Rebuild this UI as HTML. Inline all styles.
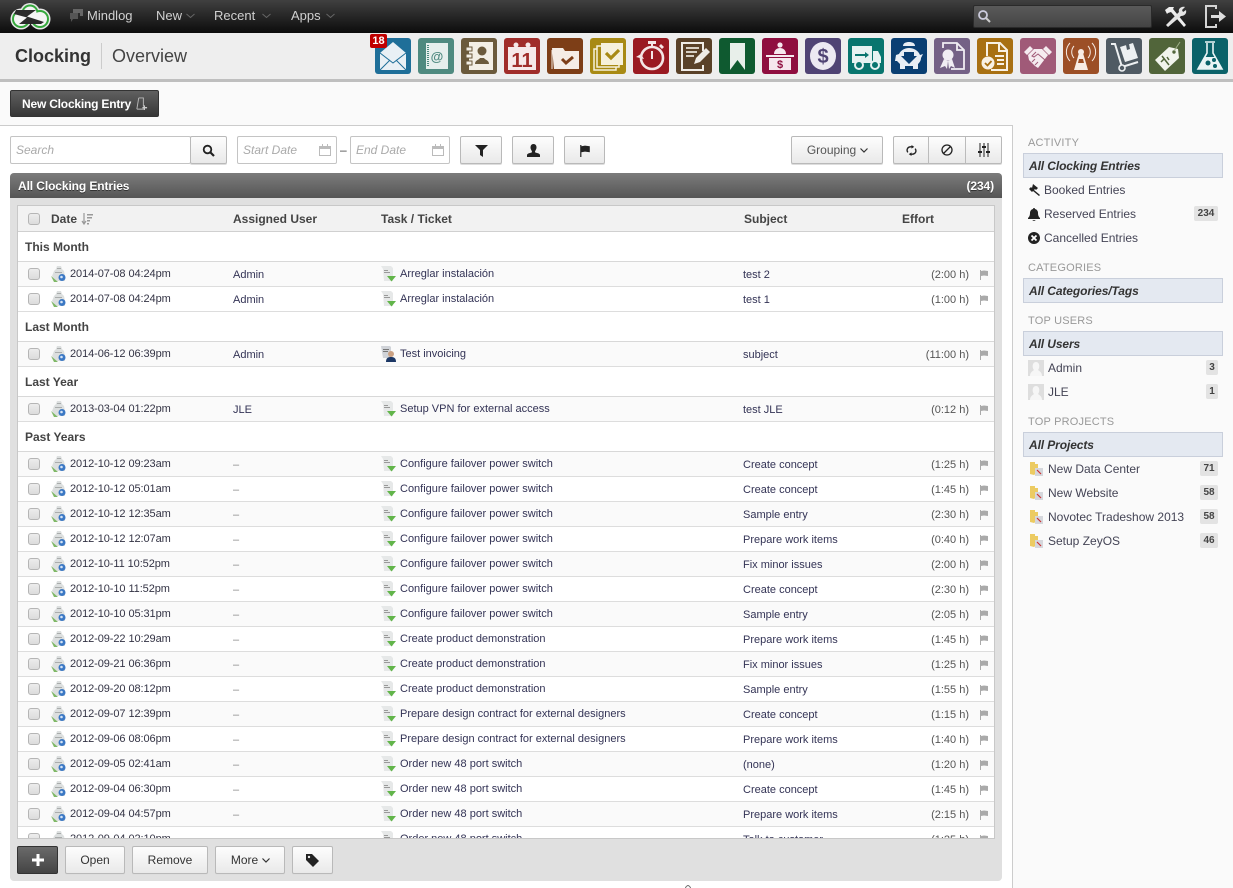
<!DOCTYPE html>
<html><head><meta charset="utf-8"><title>Clocking</title>
<style>
*{box-sizing:border-box}
html,body{margin:0;padding:0}
body{width:1233px;height:888px;overflow:hidden;position:relative;background:#fafafa;font-family:"Liberation Sans",Arial,sans-serif;font-size:11px;color:#333}
.a{position:absolute}
svg{display:block}
#top{left:0;top:0;width:1233px;height:33px;background:linear-gradient(#404040,#0c0c0c)}
.nav{position:absolute;top:8px;font-size:13px;line-height:16px;color:#d0d0d0}
#sub{left:0;top:33px;width:1233px;height:49px;background:#eee;border-bottom:3px solid #bfbfbf}
.ic{position:absolute;top:38px;width:36px;height:36px;border-radius:3px}
.btn{position:absolute;border:1px solid #b9b9b9;border-radius:2px;background:linear-gradient(#fdfdfd,#e9e9e9);text-align:center;color:#333;box-shadow:0 1px 0 #ddd}
.inp{position:absolute;border:1px solid #c4c4c4;border-radius:2px;background:#fff;height:28px;top:136px;font-style:italic;font-size:12px;line-height:26px;color:#aaa;padding-left:5px}
#main{left:0;top:125px;width:1013px;height:763px;background:#fff;border-top:1px solid #ccc;border-right:1px solid #ccc}
#pan{left:10px;top:173px;width:992px;height:708px;background:#e0e0e0;border-radius:4px}
#ph{left:10px;top:173px;width:992px;height:25px;background:linear-gradient(#7c7c7c,#555);border-radius:4px 4px 0 0;color:#fff;font-weight:bold;font-size:12px;line-height:26px;padding:0 8px;text-shadow:0 1px 0 #333;letter-spacing:-.1px}
#tb{left:17px;top:205px;width:978px;height:634px;background:#fff;border:1px solid #c8c8c8;overflow:hidden}
#hd{position:absolute;left:0;top:0;width:976px;height:26px;background:#f2f2f2;border-bottom:1px solid #d0d0d0;font-weight:bold;font-size:12px;color:#444;line-height:27px}
#hd span{position:absolute;top:0}
.g{position:absolute;left:0;width:976px;height:30px;border-bottom:1px solid #d8d8d8;background:#fff;font-weight:bold;font-size:12px;color:#444;line-height:31px;padding-left:7px}
.r{position:absolute;left:0;width:976px;height:25px;border-bottom:1px solid #ddd;background:#fff;line-height:24px;color:#335}
.r.o{background:#fafafa}
.r>*{position:absolute}
.c{left:10px;top:6px;width:12px;height:12px;border:1px solid #b5b5b5;border-radius:3px;background:linear-gradient(#ececec,#dcdcdc)}
.i{left:33px;top:4px}
.d{left:52px;top:0;color:#334;letter-spacing:-.08px}
.u{left:215px;top:1px}
.k{left:363px;top:4px}
.t{left:382px;top:0}
.s{left:725px;top:1px}
.e{right:25px;top:1px;color:#555}
.f{left:961px;top:8px}
.dash{color:#888}
.sh{position:absolute;left:1028px;font-size:11px;line-height:14px;color:#999;letter-spacing:.2px}
.sel{position:absolute;left:1023px;width:200px;height:25px;background:#e4e9f1;border:1px solid #c9cfdb;font-style:italic;font-weight:bold;font-size:12px;line-height:25px;padding-left:5px;color:#333;letter-spacing:-.1px}
.si{position:absolute;font-size:12px;line-height:16px;color:#445}
.bd{position:absolute;left:1194px;width:24px;height:15px;background:#e3e3e3;border-radius:2px;font-weight:bold;font-size:10px;line-height:15px;text-align:center;color:#444}
</style></head><body>
<svg width="0" height="0" style="position:absolute"><defs>
<symbol id="ci" viewBox="0 0 16 16"><path d="M6 0h4l1 3 2 2 1 5v5H3L1 10l2-5 2-2z" fill="#dcdfdf"/><path d="M6 2h4v1H6zM4 6h7v1H4z" fill="#a9acac"/><path d="M0 10l3 6h4z" fill="#7fb866"/><circle cx="11" cy="11.500" r="3.500" fill="#3b78c4"/><circle cx="10.500" cy="11" r="1.300" fill="#d6e4f5"/></symbol>
<symbol id="ti" viewBox="0 0 16 16"><path d="M0 0h10l2 2v13H3L2 3z" fill="#e6e8e8"/><path d="M3 4h4v1H3zM3 6h6v1H3z" fill="#999"/><path d="M6 10h9l-4.500 5.500z" fill="#62b54a"/></symbol>
<symbol id="fl" viewBox="0 0 10 10"><path d="M1 0v10h1V6l3-.5 4 .5V1L5 .5 2 1V0z" fill="#aaa"/></symbol>
<symbol id="us" viewBox="0 0 16 16"><path d="M0 0h9l1 1v11H2z" fill="#d0d3d8"/><path d="M2 3h6v1H2zM2 5h5v1H2z" fill="#777"/><circle cx="10" cy="8" r="3" fill="#caa183"/><path d="M5 16c0-4 2-5 5-5s5 1 5 5z" fill="#1c3765"/></symbol>
<symbol id="pr" viewBox="0 0 16 16"><path d="M1 1h5v2h3v8l-4 3-4-1z" fill="#eccb62"/><path d="M6 7h8v8H6z" fill="#d5d7dc"/><path d="M8 9l4 4" stroke="#c33" stroke-width="1.200"/></symbol>
<symbol id="av" viewBox="0 0 16 16"><rect width="16" height="16" fill="#dedede"/><path d="M2 16c0-4 3-5 4-6-2-2-2-8 2-8s4 6 2 8c1 1 4 2 4 6z" fill="#f6f6f6"/></symbol>
</defs></svg>

<div id="top" class="a"></div>
<svg class="a" style="left:9px;top:2px" width="42" height="28" viewBox="0 0 42 28">
<g fill="#e8e8e8"><circle cx="12" cy="17" r="10.500"/><circle cx="21" cy="11" r="10"/><circle cx="31" cy="17" r="10.500"/></g>
<g fill="#35a83c"><circle cx="12" cy="17" r="9"/><circle cx="21" cy="11" r="8.500"/><circle cx="31" cy="17" r="9"/></g>
<g fill="#f4f4f4"><circle cx="12" cy="17" r="7"/><circle cx="21" cy="11" r="6.500"/><circle cx="31" cy="17" r="7"/></g>
<path d="M7 8h20L18 14.500l17 5.500-3 2H10l8-6.500L5 12z" fill="#2a2a2a"/></svg>
<svg class="a" style="left:69px;top:8px" width="15" height="15" viewBox="0 0 15 15"><path d="M4 1h10v7H11v-3H4z" fill="#666"/><path d="M1 5h8v6H4l-2 3v-3H1z" fill="#555"/></svg>
<span class="nav" style="left:87px">Mindlog</span>
<span class="nav" style="left:156px">New</span><svg class="a" style="left:186px;top:13px" width="9" height="6" viewBox="0 0 9 6"><path d="M.5 1l4 3.500L8.500 1" fill="none" stroke="#666" stroke-width="1"/></svg>
<span class="nav" style="left:214px">Recent</span><svg class="a" style="left:262px;top:13px" width="9" height="6" viewBox="0 0 9 6"><path d="M.5 1l4 3.500L8.500 1" fill="none" stroke="#666" stroke-width="1"/></svg>
<span class="nav" style="left:291px">Apps</span><svg class="a" style="left:326px;top:13px" width="9" height="6" viewBox="0 0 9 6"><path d="M.5 1l4 3.500L8.500 1" fill="none" stroke="#666" stroke-width="1"/></svg>
<div class="a" style="left:973px;top:5px;width:179px;height:23px;background:linear-gradient(#5a5a5a,#444);border:1px solid #2a2a2a;border-radius:2px"></div>
<svg class="a" style="left:977px;top:9px" width="15" height="15" viewBox="0 0 15 15"><circle cx="6" cy="6" r="4" fill="none" stroke="#ccd" stroke-width="1.800"/><path d="M9 9l4 4" stroke="#ccc" stroke-width="2"/></svg>
<svg class="a" style="left:1164px;top:5px" width="25" height="24" viewBox="0 0 25 24"><path d="M1 5l4-3h5l-1 2 13 16-2 2L7 7 4 8 3 9z" fill="#eee"/><path d="M2 20L15 7c-1-3 2-6 6-5l-3 3 1 2 3-2c1 4-2 6-5 6L4 22z" fill="#e4e4e4"/></svg>
<svg class="a" style="left:1204px;top:4px" width="23" height="25" viewBox="0 0 23 25"><path d="M12 5V2H2v21h10v-3" fill="none" stroke="#d4d4d4" stroke-width="2"/><path d="M7 11h8V7l7 5.500L15 18v-4H7z" fill="#ddd"/></svg>

<div id="sub" class="a"></div>
<div class="a" style="left:15px;top:45px;font-size:18px;font-weight:bold;line-height:22px;color:#333">Clocking</div>
<div class="a" style="left:101px;top:43px;width:1px;height:26px;background:#ccc"></div>
<div class="a" style="left:112px;top:45px;font-size:18px;line-height:22px;color:#444">Overview</div>

<div class="ic" style="left:375px;background:#1f6f99"><svg width="36" height="36" viewBox="0 0 36 36"><path d="M5 15L18 4l13 11v17H5z" fill="#e9f0f5"/><path d="M5 15l13 10 13-10M5 32l10-10M31 32L21 22" fill="none" stroke="#1f6f99"/></svg></div>
<div class="a" style="left:370px;top:34px;width:17px;height:14px;background:#c00000;border-radius:2px;color:#fff;font-weight:bold;font-size:11px;line-height:14px;text-align:center">18</div>
<div class="ic" style="left:418px;background:#4f8a80"><svg width="36" height="36" viewBox="0 0 36 36"><rect x="8" y="5" width="22" height="26" fill="#e6efed"/><path d="M10 7v22" stroke="#4f8a80" stroke-width="2" stroke-dasharray="1 1"/><text x="19" y="23" font-size="13" font-weight="bold" font-family="Liberation Sans" text-anchor="middle" fill="#4f8a80">@</text></svg></div>
<div class="ic" style="left:461px;background:#6b5a3c"><svg width="36" height="36" viewBox="0 0 36 36"><rect x="8" y="4" width="24" height="28" fill="#f3efe6"/><path d="M5 9h6v4H5zM5 16h6v4H5zM5 23h6v4H5z" fill="#f3efe6" stroke="#6b5a3c"/><circle cx="21" cy="13" r="4.500" fill="#6b5a3c"/><path d="M14 26c0-4 4-4 5-6h4c1 2 5 2 5 6z" fill="#6b5a3c"/></svg></div>
<div class="ic" style="left:504px;background:#a02d2a"><svg width="36" height="36" viewBox="0 0 36 36"><rect x="4" y="7" width="28" height="25" fill="#f6e9e9"/><rect x="4" y="4" width="28" height="5" fill="#a02d2a"/><circle cx="12" cy="7" r="2.500" fill="#f6e9e9"/><circle cx="24" cy="7" r="2.500" fill="#f6e9e9"/><text x="18" y="29" font-size="20" font-weight="bold" font-family="Liberation Sans" text-anchor="middle" fill="#a02d2a">11</text></svg></div>
<div class="ic" style="left:547px;background:#7d3e17"><svg width="36" height="36" viewBox="0 0 36 36"><path d="M5 10h11l2 3h14v18H7z" fill="#f5ede6"/><path d="M5 12v19" stroke="#f5ede6"/><path d="M15 21l4 4 7-6" fill="none" stroke="#7d3e17" stroke-width="3"/></svg></div>
<div class="ic" style="left:590px;background:#a88a14"><svg width="36" height="36" viewBox="0 0 36 36"><rect x="4" y="11" width="22" height="21" fill="none" stroke="#f6f1dc" stroke-width="1.500"/><rect x="7" y="8" width="22" height="21" fill="#a88a14" stroke="#f6f1dc" stroke-width="1.500"/><rect x="11" y="5" width="22" height="22" fill="#f6f1dc"/><path d="M16 15l5 5 8-8" fill="none" stroke="#a88a14" stroke-width="3.200"/></svg></div>
<div class="ic" style="left:633px;background:#9a1a22"><svg width="36" height="36" viewBox="0 0 36 36"><circle cx="19" cy="20" r="11" fill="none" stroke="#f4e6e6" stroke-width="2.600"/><path d="M15 3h8v3h-3v3h-2V6h-3zM28 6l3 3-2 2-3-3z" fill="#f4e6e6"/><path d="M19 13v8" stroke="#f4e6e6" stroke-width="2"/><path d="M3 19l5-3 3 5z" fill="#f4e6e6"/></svg></div>
<div class="ic" style="left:676px;background:#5a4128"><svg width="36" height="36" viewBox="0 0 36 36"><path d="M27 13V5H6v27h21v-5" fill="none" stroke="#f0ece6" stroke-width="2"/><path d="M10 9h13v2H10zM10 13h11v2H10zM10 17h8v2h-8z" fill="#d8d0c4"/><path d="M18 26l2-6 10-10 4 4-10 10z" fill="#f0ece6"/></svg></div>
<div class="ic" style="left:719px;background:#0f5a30"><svg width="36" height="36" viewBox="0 0 36 36"><path d="M11 5h15v27l-7.500-10L11 32z" fill="#e8efea"/></svg></div>
<div class="ic" style="left:762px;background:#8f0e3f"><svg width="36" height="36" viewBox="0 0 36 36"><circle cx="18" cy="7" r="2.600" fill="#f6e7ee"/><path d="M12 16c0-4 3-6 6-6s6 2 6 6z" fill="#f6e7ee"/><path d="M4 17h28v2H4z" fill="#f6e7ee"/><rect x="7" y="20" width="22" height="12" fill="#f6e7ee"/><text x="18" y="30" font-size="11" font-weight="bold" font-family="Liberation Sans" text-anchor="middle" fill="#8f0e3f">$</text></svg></div>
<div class="ic" style="left:805px;background:#4f4374"><svg width="36" height="36" viewBox="0 0 36 36"><ellipse cx="18" cy="18" rx="13" ry="14" fill="#ece9f2"/><text x="18" y="25" font-size="20" font-weight="bold" font-family="Liberation Sans" text-anchor="middle" fill="#4f4374">$</text></svg></div>
<div class="ic" style="left:848px;background:#08756e"><svg width="36" height="36" viewBox="0 0 36 36"><rect x="4" y="8" width="20" height="17" fill="#e6f2f1"/><path d="M25 13h5l3 6v6h-8z" fill="#e6f2f1"/><path d="M7 16h10v-2l4 3-4 3v-2H7z" fill="#08756e"/><circle cx="11" cy="27" r="4" fill="#08756e" stroke="#e6f2f1" stroke-width="2"/><circle cx="27" cy="27" r="4" fill="#08756e" stroke="#e6f2f1" stroke-width="2"/></svg></div>
<div class="ic" style="left:891px;background:#0a3f73"><svg width="36" height="36" viewBox="0 0 36 36"><path d="M12 8c0-3 3-4 6-4s6 1 6 4z" fill="#e8eef5"/><path d="M5 17l3-1c2-4 6-6 10-6s9 2 11 7l3-1-2 4c0 3-2 5-3 6v5h-5v-3h-8v3h-5v-5l-3-3H4z" fill="#e8eef5"/><path d="M13 14h10v4h3l-8 8-8-8h3z" fill="#0a3f73"/></svg></div>
<div class="ic" style="left:934px;background:#746186"><svg width="36" height="36" viewBox="0 0 36 36"><path d="M9 10V5h14l7 7v19H17" fill="none" stroke="#f0edf3" stroke-width="1.800"/><path d="M23 5v7h7" fill="none" stroke="#f0edf3" stroke-width="1.800"/><circle cx="14" cy="17" r="5.500" fill="#f0edf3"/><path d="M10 21l-4 9 5-2 2 3 1-8zM18 21l3 9-4-2-2 3-1-8z" fill="#f0edf3"/></svg></div>
<div class="ic" style="left:977px;background:#a87012"><svg width="36" height="36" viewBox="0 0 36 36"><path d="M10 18V5h13l7 7v20H14" fill="none" stroke="#f8f1e4" stroke-width="2"/><path d="M22 5v8h8" fill="none" stroke="#f8f1e4" stroke-width="2"/><path d="M18 17h9v2h-9zM20 21h7v2h-7zM20 25h7v2h-7z" fill="#f8f1e4"/><circle cx="11" cy="25" r="6.500" fill="#f8f1e4"/><path d="M8 25l2.500 2.500 4-4.500" fill="none" stroke="#a87012" stroke-width="1.800"/></svg></div>
<div class="ic" style="left:1020px;background:#a05a78"><svg width="36" height="36" viewBox="0 0 36 36"><path d="M4 14l6-6 3 3-6 6zM32 14l-6-6-3 3 6 6z" fill="#f5ebf0"/><path d="M8 17l6-6h8l6 6-10 13-3-2-2-2-2-2-2-2z" fill="#f5ebf0"/><path d="M16 14l-4 4 2 1 4-3 7 6M15 27l3-3M12 24l3-3" fill="none" stroke="#a05a78"/></svg></div>
<div class="ic" style="left:1063px;background:#9c4f26"><svg width="36" height="36" viewBox="0 0 36 36"><circle cx="18" cy="14" r="3" fill="#f7ece5"/><path d="M16 15h4l5 17H11z" fill="#f7ece5"/><path d="M16 21h4l1 4h-6z" fill="#9c4f26"/><path d="M11 8a9 9 0 0 0 0 12M7 5a13 13 0 0 0 0 18M25 8a9 9 0 0 1 0 12M29 5a13 13 0 0 1 0 18" fill="none" stroke="#f7ece5"/></svg></div>
<div class="ic" style="left:1106px;background:#4f5a63"><svg width="36" height="36" viewBox="0 0 36 36"><path d="M5 6h4l7 23 16-5" fill="none" stroke="#edf0f2" stroke-width="2"/><circle cx="16" cy="30" r="3" fill="#4f5a63" stroke="#edf0f2" stroke-width="1.600"/><path d="M14 9l13-4 5 15-13 4z" fill="#edf0f2"/><path d="M20 7l1 5 3-1-1-5z" fill="#4f5a63"/></svg></div>
<div class="ic" style="left:1149px;background:#51653a"><svg width="36" height="36" viewBox="0 0 36 36"><path d="M6 22L20 9l9 2 1 9-14 13z" fill="#f1f4ec"/><circle cx="25" cy="14" r="1.700" fill="#51653a"/><path d="M25 13l6-9" stroke="#9fb08a"/><path d="M13 18l7 9M12 24l3-3M18 19l2 3" stroke="#51653a" stroke-width="1.500"/></svg></div>
<div class="ic" style="left:1192px;background:#0b6269"><svg width="36" height="36" viewBox="0 0 36 36"><path d="M13 4h10M15 5v10L6 31h24l-9-16V5" fill="#0b6269" stroke="#eaf4f5" stroke-width="1.600"/><path d="M12 19h12l6 12H6z" fill="#eaf4f5"/><circle cx="16" cy="25" r="2.500" fill="#0b6269"/><circle cx="22" cy="22" r="2" fill="#0b6269"/><circle cx="23" cy="28" r="2" fill="#0b6269"/></svg></div>

<div class="a" style="left:10px;top:90px;width:149px;height:27px;background:linear-gradient(#606060,#363636);border:1px solid #333;border-radius:2px;color:#fff;font-weight:bold;font-size:12px;line-height:26px;padding-left:11px;letter-spacing:-.2px">New Clocking Entry</div>
<svg class="a" style="left:135px;top:97px" width="13" height="14" viewBox="0 0 14 15"><path d="M4 1h5v9M2 13L4 1M2 13h7" fill="none" stroke="#bbb"/><path d="M10 9v5M8 11.500h5" stroke="#ccc" stroke-width="1.500"/></svg>

<div id="main" class="a"></div>
<div class="inp" style="left:10px;width:181px">Search</div>
<div class="btn" style="left:190px;top:136px;width:37px;height:28px"><svg style="margin:7px auto 0" width="13" height="13" viewBox="0 0 13 13"><circle cx="5.500" cy="5.500" r="3.800" fill="none" stroke="#222" stroke-width="1.800"/><path d="M8 8l4 4" stroke="#222" stroke-width="2.200"/></svg></div>
<div class="inp" style="left:237px;width:100px">Start Date</div>
<svg class="a" style="left:319px;top:144px" width="12" height="12" viewBox="0 0 12 12"><path d="M.5 2.500h11v9H.5z" fill="none" stroke="#bbb"/><path d="M1 3h10v2H1zM3 0h1v3H3zM8 0h1v3H8z" fill="#bbb"/></svg>
<span class="a" style="left:340px;top:143px;font-size:12px;line-height:14px;color:#444">–</span>
<div class="inp" style="left:350px;width:100px">End Date</div>
<svg class="a" style="left:432px;top:144px" width="12" height="12" viewBox="0 0 12 12"><path d="M.5 2.500h11v9H.5z" fill="none" stroke="#bbb"/><path d="M1 3h10v2H1zM3 0h1v3H3zM8 0h1v3H8z" fill="#bbb"/></svg>
<div class="btn" style="left:460px;top:136px;width:42px;height:28px"><svg style="margin:7px auto 0" width="13" height="13" viewBox="0 0 13 13"><path d="M0 1h13L8 6v7L5 11V6z" fill="#222"/></svg></div>
<div class="btn" style="left:512px;top:136px;width:42px;height:28px"><svg style="margin:7px auto 0" width="13" height="13" viewBox="0 0 13 13"><path d="M6.500 0C8.500 0 9.500 1.500 9.500 3.500 9.500 5.500 8 6.500 8 8c0 1 5 1 5 3v2H0v-2c0-2 5-2 5-3 0-1.500-1.500-2.500-1.500-4.500C3.500 1.500 4.500 0 6.500 0z" fill="#222"/></svg></div>
<div class="btn" style="left:564px;top:136px;width:41px;height:28px"><svg style="margin:8px auto 0" width="12" height="12" viewBox="0 0 10 10"><path d="M1 0v10h1V6l3-.5 4 .5V1L5 .5 2 1V0z" fill="#222"/></svg></div>
<div class="btn" style="left:791px;top:136px;width:92px;height:28px;font-size:12px;line-height:26px;color:#555;padding-right:11px">Grouping</div>
<svg class="a" style="left:860px;top:148px" width="8" height="5" viewBox="0 0 8 5"><path d="M.5 .5L4 4 7.500 .5" fill="none" stroke="#333" stroke-width="1.200"/></svg>
<div class="btn" style="left:893px;top:136px;width:109px;height:28px"></div>
<div class="a" style="left:928px;top:137px;width:1px;height:26px;background:#bbb"></div>
<div class="a" style="left:965px;top:137px;width:1px;height:26px;background:#bbb"></div>
<svg class="a" style="left:906px;top:145px" width="11" height="11" viewBox="0 0 12 12"><path d="M2 8C0 5 2 2 5 2h2M10 4c2 3 0 6-3 6H5" fill="none" stroke="#222" stroke-width="1.500"/><path d="M6 0l3 2-3 2zM6 8L3 10l3 2z" fill="#222"/></svg>
<svg class="a" style="left:941px;top:144px" width="12" height="12" viewBox="0 0 12 12"><circle cx="6" cy="6" r="5" fill="none" stroke="#222" stroke-width="1.300"/><path d="M2.500 9.500l7-7" stroke="#222" stroke-width="1.300"/></svg>
<svg class="a" style="left:978px;top:143px" width="12" height="14" viewBox="0 0 12 14"><path d="M2 0v14M6 0v14M10 0v14" stroke="#222"/><path d="M0 8h4v2H0zM4 3h4v2H4zM8 8h4v2H8z" fill="#222"/></svg>

<div id="pan" class="a"></div>
<div id="ph" class="a">All Clocking Entries<span style="position:absolute;right:8px;top:0">(234)</span></div>

<div id="tb" class="a">
<div id="hd"><i class="c" style="position:absolute;top:7px"></i><span style="left:33px">Date</span><svg class="a" style="left:63px;top:7px" width="12" height="13" viewBox="0 0 12 13"><path d="M3 0v10M1 8l2 3 2-3" fill="none" stroke="#999" stroke-width="1.200"/><path d="M6 1h6v1.500H6zM6 4h5v1.500H6zM6 7h3v1.500H6zM6 10h2v1.500H6z" fill="#999"/></svg><span style="left:215px">Assigned User</span><span style="left:363px">Task / Ticket</span><span style="left:726px">Subject</span><span style="left:884px">Effort</span></div>

<div class="g" style="top:26px">This Month</div>
<div class="r o" style="top:56px"><i class="c"></i><svg class="i" width="16" height="16"><use href="#ci"/></svg><span class="d">2014-07-08 04:24pm</span><span class="u">Admin</span><svg class="k" width="16" height="16"><use href="#ti"/></svg><span class="t">Arreglar instalación</span><span class="s">test 2</span><span class="e">(2:00 h)</span><svg class="f" width="10" height="10"><use href="#fl"/></svg></div>
<div class="r" style="top:81px"><i class="c"></i><svg class="i" width="16" height="16"><use href="#ci"/></svg><span class="d">2014-07-08 04:24pm</span><span class="u">Admin</span><svg class="k" width="16" height="16"><use href="#ti"/></svg><span class="t">Arreglar instalación</span><span class="s">test 1</span><span class="e">(1:00 h)</span><svg class="f" width="10" height="10"><use href="#fl"/></svg></div>
<div class="g" style="top:106px">Last Month</div>
<div class="r o" style="top:136px"><i class="c"></i><svg class="i" width="16" height="16"><use href="#ci"/></svg><span class="d">2014-06-12 06:39pm</span><span class="u">Admin</span><svg class="k" width="16" height="16"><use href="#us"/></svg><span class="t">Test invoicing</span><span class="s">subject</span><span class="e">(11:00 h)</span><svg class="f" width="10" height="10"><use href="#fl"/></svg></div>
<div class="g" style="top:161px">Last Year</div>
<div class="r o" style="top:191px"><i class="c"></i><svg class="i" width="16" height="16"><use href="#ci"/></svg><span class="d">2013-03-04 01:22pm</span><span class="u">JLE</span><svg class="k" width="16" height="16"><use href="#ti"/></svg><span class="t">Setup VPN for external access</span><span class="s">test JLE</span><span class="e">(0:12 h)</span><svg class="f" width="10" height="10"><use href="#fl"/></svg></div>
<div class="g" style="top:216px">Past Years</div>
<div class="r o" style="top:246px"><i class="c"></i><svg class="i" width="16" height="16"><use href="#ci"/></svg><span class="d">2012-10-12 09:23am</span><span class="u dash">–</span><svg class="k" width="16" height="16"><use href="#ti"/></svg><span class="t">Configure failover power switch</span><span class="s">Create concept</span><span class="e">(1:25 h)</span><svg class="f" width="10" height="10"><use href="#fl"/></svg></div>
<div class="r" style="top:271px"><i class="c"></i><svg class="i" width="16" height="16"><use href="#ci"/></svg><span class="d">2012-10-12 05:01am</span><span class="u dash">–</span><svg class="k" width="16" height="16"><use href="#ti"/></svg><span class="t">Configure failover power switch</span><span class="s">Create concept</span><span class="e">(1:45 h)</span><svg class="f" width="10" height="10"><use href="#fl"/></svg></div>
<div class="r o" style="top:296px"><i class="c"></i><svg class="i" width="16" height="16"><use href="#ci"/></svg><span class="d">2012-10-12 12:35am</span><span class="u dash">–</span><svg class="k" width="16" height="16"><use href="#ti"/></svg><span class="t">Configure failover power switch</span><span class="s">Sample entry</span><span class="e">(2:30 h)</span><svg class="f" width="10" height="10"><use href="#fl"/></svg></div>
<div class="r" style="top:321px"><i class="c"></i><svg class="i" width="16" height="16"><use href="#ci"/></svg><span class="d">2012-10-12 12:07am</span><span class="u dash">–</span><svg class="k" width="16" height="16"><use href="#ti"/></svg><span class="t">Configure failover power switch</span><span class="s">Prepare work items</span><span class="e">(0:40 h)</span><svg class="f" width="10" height="10"><use href="#fl"/></svg></div>
<div class="r o" style="top:346px"><i class="c"></i><svg class="i" width="16" height="16"><use href="#ci"/></svg><span class="d">2012-10-11 10:52pm</span><span class="u dash">–</span><svg class="k" width="16" height="16"><use href="#ti"/></svg><span class="t">Configure failover power switch</span><span class="s">Fix minor issues</span><span class="e">(2:00 h)</span><svg class="f" width="10" height="10"><use href="#fl"/></svg></div>
<div class="r" style="top:371px"><i class="c"></i><svg class="i" width="16" height="16"><use href="#ci"/></svg><span class="d">2012-10-10 11:52pm</span><span class="u dash">–</span><svg class="k" width="16" height="16"><use href="#ti"/></svg><span class="t">Configure failover power switch</span><span class="s">Create concept</span><span class="e">(2:30 h)</span><svg class="f" width="10" height="10"><use href="#fl"/></svg></div>
<div class="r o" style="top:396px"><i class="c"></i><svg class="i" width="16" height="16"><use href="#ci"/></svg><span class="d">2012-10-10 05:31pm</span><span class="u dash">–</span><svg class="k" width="16" height="16"><use href="#ti"/></svg><span class="t">Configure failover power switch</span><span class="s">Sample entry</span><span class="e">(2:05 h)</span><svg class="f" width="10" height="10"><use href="#fl"/></svg></div>
<div class="r" style="top:421px"><i class="c"></i><svg class="i" width="16" height="16"><use href="#ci"/></svg><span class="d">2012-09-22 10:29am</span><span class="u dash">–</span><svg class="k" width="16" height="16"><use href="#ti"/></svg><span class="t">Create product demonstration</span><span class="s">Prepare work items</span><span class="e">(1:45 h)</span><svg class="f" width="10" height="10"><use href="#fl"/></svg></div>
<div class="r o" style="top:446px"><i class="c"></i><svg class="i" width="16" height="16"><use href="#ci"/></svg><span class="d">2012-09-21 06:36pm</span><span class="u dash">–</span><svg class="k" width="16" height="16"><use href="#ti"/></svg><span class="t">Create product demonstration</span><span class="s">Fix minor issues</span><span class="e">(1:25 h)</span><svg class="f" width="10" height="10"><use href="#fl"/></svg></div>
<div class="r" style="top:471px"><i class="c"></i><svg class="i" width="16" height="16"><use href="#ci"/></svg><span class="d">2012-09-20 08:12pm</span><span class="u dash">–</span><svg class="k" width="16" height="16"><use href="#ti"/></svg><span class="t">Create product demonstration</span><span class="s">Sample entry</span><span class="e">(1:55 h)</span><svg class="f" width="10" height="10"><use href="#fl"/></svg></div>
<div class="r o" style="top:496px"><i class="c"></i><svg class="i" width="16" height="16"><use href="#ci"/></svg><span class="d">2012-09-07 12:39pm</span><span class="u dash">–</span><svg class="k" width="16" height="16"><use href="#ti"/></svg><span class="t">Prepare design contract for external designers</span><span class="s">Create concept</span><span class="e">(1:15 h)</span><svg class="f" width="10" height="10"><use href="#fl"/></svg></div>
<div class="r" style="top:521px"><i class="c"></i><svg class="i" width="16" height="16"><use href="#ci"/></svg><span class="d">2012-09-06 08:06pm</span><span class="u dash">–</span><svg class="k" width="16" height="16"><use href="#ti"/></svg><span class="t">Prepare design contract for external designers</span><span class="s">Prepare work items</span><span class="e">(1:40 h)</span><svg class="f" width="10" height="10"><use href="#fl"/></svg></div>
<div class="r o" style="top:546px"><i class="c"></i><svg class="i" width="16" height="16"><use href="#ci"/></svg><span class="d">2012-09-05 02:41am</span><span class="u dash">–</span><svg class="k" width="16" height="16"><use href="#ti"/></svg><span class="t">Order new 48 port switch</span><span class="s">(none)</span><span class="e">(1:20 h)</span><svg class="f" width="10" height="10"><use href="#fl"/></svg></div>
<div class="r" style="top:571px"><i class="c"></i><svg class="i" width="16" height="16"><use href="#ci"/></svg><span class="d">2012-09-04 06:30pm</span><span class="u dash">–</span><svg class="k" width="16" height="16"><use href="#ti"/></svg><span class="t">Order new 48 port switch</span><span class="s">Create concept</span><span class="e">(1:45 h)</span><svg class="f" width="10" height="10"><use href="#fl"/></svg></div>
<div class="r o" style="top:596px"><i class="c"></i><svg class="i" width="16" height="16"><use href="#ci"/></svg><span class="d">2012-09-04 04:57pm</span><span class="u dash">–</span><svg class="k" width="16" height="16"><use href="#ti"/></svg><span class="t">Order new 48 port switch</span><span class="s">Prepare work items</span><span class="e">(2:15 h)</span><svg class="f" width="10" height="10"><use href="#fl"/></svg></div>
<div class="r" style="top:621px"><i class="c"></i><svg class="i" width="16" height="16"><use href="#ci"/></svg><span class="d">2012-09-04 02:10pm</span><span class="u dash">–</span><svg class="k" width="16" height="16"><use href="#ti"/></svg><span class="t">Order new 48 port switch</span><span class="s">Talk to customer</span><span class="e">(1:25 h)</span><svg class="f" width="10" height="10"><use href="#fl"/></svg></div>
</div>

<div class="a" style="left:17px;top:846px;width:41px;height:28px;background:linear-gradient(#6a6a6a,#444);border:1px solid #333;border-radius:2px"><svg style="margin:7px auto 0" width="12" height="12" viewBox="0 0 12 12"><path d="M4.500 0h3v4.500H12v3H7.500V12h-3V7.500H0v-3h4.500z" fill="#fff"/></svg></div>
<div class="btn" style="left:65px;top:846px;width:60px;height:28px;font-size:12px;line-height:26px">Open</div>
<div class="btn" style="left:132px;top:846px;width:76px;height:28px;font-size:12px;line-height:26px">Remove</div>
<div class="btn" style="left:215px;top:846px;width:70px;height:28px;font-size:12px;line-height:26px;padding-right:11px">More</div>
<svg class="a" style="left:262px;top:858px" width="8" height="5" viewBox="0 0 8 5"><path d="M.5 .5L4 4 7.500 .5" fill="none" stroke="#333" stroke-width="1.200"/></svg>
<div class="btn" style="left:292px;top:846px;width:41px;height:28px"><svg style="margin:7px auto 0" width="13" height="13" viewBox="0 0 13 13"><path d="M0 0h6l7 7-6 6-7-7z" fill="#222"/><circle cx="3" cy="3" r="1.200" fill="#eee"/></svg></div>
<svg class="a" style="left:685px;top:885px" width="6" height="3" viewBox="0 0 6 3"><path d="M0 3l3-3 3 3" fill="none" stroke="#777"/></svg>

<div class="sh" style="top:136px">ACTIVITY</div>
<div class="sel" style="top:153px">All Clocking Entries</div>
<svg class="a" style="left:1028px;top:184px" width="13" height="12" viewBox="0 0 13 12"><path d="M5 0l5 4-2 2-1-1-1 1 6 5-1 1-6-5-1 1-3-3 2-2 1 1z" fill="#222"/></svg>
<span class="si" style="left:1044px;top:182px">Booked Entries</span>
<svg class="a" style="left:1028px;top:208px" width="12" height="13" viewBox="0 0 12 13"><path d="M6 0c1 0 1 1 1 1 2 .5 3 2 3 4 0 3 1 4 2 5v1H0v-1c1-1 2-2 2-5 0-2 1-3.500 3-4 0 0 0-1 1-1zM4.500 12h3c0 1-3 1-3 0z" fill="#222"/></svg>
<span class="si" style="left:1044px;top:206px">Reserved Entries</span>
<div class="bd" style="top:206px">234</div>
<svg class="a" style="left:1028px;top:232px" width="12" height="12" viewBox="0 0 12 12"><circle cx="6" cy="6" r="6" fill="#222"/><path d="M3.500 3.500l5 5M8.500 3.500l-5 5" stroke="#fff" stroke-width="1.800"/></svg>
<span class="si" style="left:1044px;top:230px">Cancelled Entries</span>

<div class="sh" style="top:261px">CATEGORIES</div>
<div class="sel" style="top:278px">All Categories/Tags</div>

<div class="sh" style="top:314px">TOP USERS</div>
<div class="sel" style="top:331px">All Users</div>
<svg class="a" style="left:1028px;top:360px" width="16" height="16"><use href="#av"/></svg>
<span class="si" style="left:1048px;top:360px">Admin</span>
<div class="bd" style="left:1206px;top:360px;width:12px">3</div>
<svg class="a" style="left:1028px;top:384px" width="16" height="16"><use href="#av"/></svg>
<span class="si" style="left:1048px;top:384px">JLE</span>
<div class="bd" style="left:1206px;top:384px;width:12px">1</div>

<div class="sh" style="top:415px">TOP PROJECTS</div>
<div class="sel" style="top:432px">All Projects</div>
<svg class="a" style="left:1029px;top:461px" width="16" height="16"><use href="#pr"/></svg>
<span class="si" style="left:1048px;top:461px">New Data Center</span>
<div class="bd" style="left:1200px;top:461px;width:18px">71</div>
<svg class="a" style="left:1029px;top:485px" width="16" height="16"><use href="#pr"/></svg>
<span class="si" style="left:1048px;top:485px">New Website</span>
<div class="bd" style="left:1200px;top:485px;width:18px">58</div>
<svg class="a" style="left:1029px;top:509px" width="16" height="16"><use href="#pr"/></svg>
<span class="si" style="left:1048px;top:509px">Novotec Tradeshow 2013</span>
<div class="bd" style="left:1200px;top:509px;width:18px">58</div>
<svg class="a" style="left:1029px;top:533px" width="16" height="16"><use href="#pr"/></svg>
<span class="si" style="left:1048px;top:533px">Setup ZeyOS</span>
<div class="bd" style="left:1200px;top:533px;width:18px">46</div>
</body></html>
